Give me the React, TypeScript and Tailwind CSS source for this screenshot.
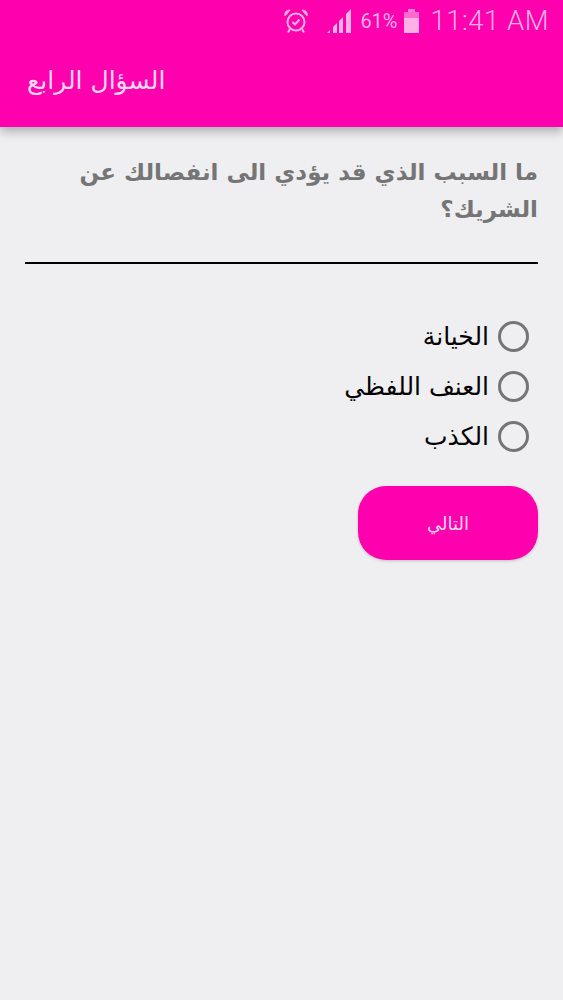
import React from 'react';

const options = ['الخيانة', 'العنف اللفظي', 'الكذب'];

const App: React.FC = () => {
    return (
        <div className="w-[563px] h-[1000px] bg-[#efeff1] font-['DejaVu_Sans',sans-serif] overflow-hidden">
            {/* Status bar + toolbar */}
            <div className="h-[127px] bg-[#ff00ae] shadow-[0_4px_10px_rgba(0,0,0,0.3)]">
                <div className="h-[42px] flex items-center justify-end pr-[14px] text-[#ffb0e4]">
                    <svg width="26" height="26" viewBox="0 0 26 26" fill="none" stroke="currentColor" strokeWidth="2" className="mr-[17px]">
                        <circle cx="13" cy="14" r="8.5" />
                        <path d="M9.5 14l2.5 2.5 4.5-5" />
                        <path d="M2 8c-1-3 1-6 5-6zM24 8c1-3-1-6-5-6z" fill="currentColor" strokeWidth="1" />
                        <path d="M7 21l-2 3.5M19 21l2 3.5" />
                    </svg>
                    <svg width="28" height="26" viewBox="0 0 28 26" fill="currentColor" className="mr-[6px]">
                        <path d="M1 25l3-3v3zM7 25v-6l4-4v10zM13 25V13l4-4v16zM20 25V6l5-5v24z" />
                    </svg>
                    <span className="font-['Roboto',sans-serif] text-[20px] mr-[5px]">61%</span>
                    <svg width="17" height="26" viewBox="0 0 17 26" fill="currentColor" className="mr-[11px]">
                        <path d="M5 1h7v3H5z" opacity="0.7" />
                        <path d="M1 4h15v6H1z" opacity="0.6" />
                        <path d="M1 10h15v15H1z" />
                    </svg>
                    <span className="font-['Roboto',sans-serif] text-[27.5px] font-light tracking-[0.5px]">11:41 AM</span>
                </div>
                <div dir="rtl" className="h-[76px] flex items-center justify-end pl-[27px]">
                    <span className="text-[25px] leading-none text-[#ffd9f2]">السؤال الرابع</span>
                </div>
            </div>

            <div dir="rtl" className="px-[25px] pt-[27px]">
                {/* Question */}
                <p className="text-[23px] leading-[37px] font-bold text-[#757575]">
                    ما السبب الذي قد يؤدي الى انفصالك عن الشريك؟
                </p>
                <div className="h-[2px] bg-black mt-[34px]" />

                {/* Options */}
                <div className="mt-[56px] flex flex-col gap-[18px] pr-[9px]">
                    {options.map((option) => (
                        <label key={option} className="flex items-center h-[32px] gap-[9px]">
                            <span className="w-[31px] h-[31px] rounded-full border-[3px] border-[#757575] shrink-0" />
                            <span className="text-[25px] leading-none text-black">{option}</span>
                        </label>
                    ))}
                </div>

                <button className="mt-[34px] block w-[180px] h-[74px] rounded-[28px] bg-[#ff00ae] text-[#ffd9f2] text-[18px] shadow-[0_1px_3px_rgba(0,0,0,0.2)]">
                    التالي
                </button>
            </div>
        </div>
    );
};

export default App;
